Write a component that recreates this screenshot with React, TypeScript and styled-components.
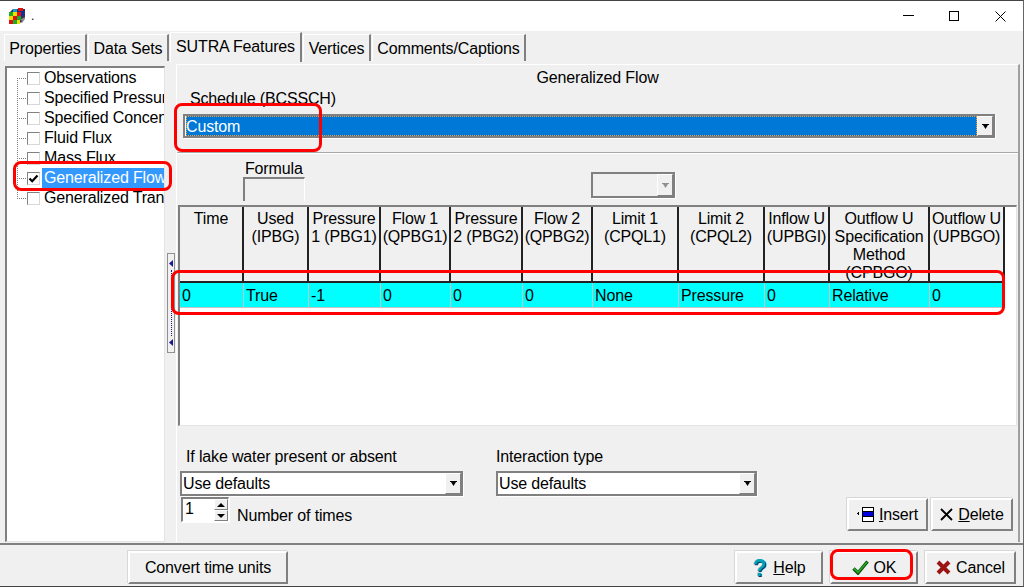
import React from 'react';
import styled, { createGlobalStyle } from 'styled-components';

const Global = createGlobalStyle`
  html, body { margin: 0; padding: 0; background: #f0f0f0; }
  * { box-sizing: border-box; }
`;

const Win = styled.div`
  position: relative;
  width: 1024px;
  height: 587px;
  overflow: hidden;
  display: flex;
  flex-direction: column;
  background: #f0f0f0;
  border-top: 1px solid #444;
  border-bottom: 1px solid #444;
  border-right: 1px solid #666;
  font-family: "Liberation Sans", Arial, sans-serif;
  font-size: 16px;
  letter-spacing: -0.15px;
  color: #000;
`;

const TitleBar = styled.div`
  height: 30px;
  flex: none;
  background: #fff;
  display: flex;
  align-items: center;
  padding-left: 9px;
`;
const TitleText = styled.span`
  margin-left: 6px;
  font-size: 12px;
  line-height: 12px;
`;
const WinBtns = styled.div`
  margin-left: auto;
  display: flex;
  height: 100%;
`;
const WinBtn = styled.div`
  width: 46px;
  display: flex;
  align-items: center;
  justify-content: center;
`;

const Body = styled.div`
  height: 512px;
  flex: none;
  display: flex;
`;
const LeftCol = styled.div`
  width: 167px;
  flex: none;
  padding-top: 2px;
`;
const Tabs = styled.div<{ $indent?: number }>`
  display: flex;
  align-items: flex-end;
  height: 28px;
  margin-left: ${p => p.$indent ?? 0}px;
  position: relative;
  z-index: 1;
`;
const Tab = styled.div<{ $w: number; $on?: boolean }>`
  width: ${p => p.$w}px;
  height: ${p => (p.$on ? 30 : 27)}px;
  flex: none;
  margin-right: 1px;
  display: flex;
  justify-content: center;
  padding-top: 5px;
  line-height: 18px;
  background: #f0f0f0;
  border-top: 1px solid #fff;
  border-left: 1px solid #fff;
  border-right: 2px solid #808080;
  white-space: nowrap;
  ${p => p.$on && 'margin-bottom: -1px;'}
`;
const TreeBox = styled.div`
  margin: 5px 0 0 5px;
  width: 160px;
  height: 476px;
  background: #fff;
  border-top: 2px solid #808080;
  border-left: 2px solid #808080;
  border-right: 1px solid #e4e4e4;
  border-bottom: 1px solid #e4e4e4;
  overflow: hidden;
`;
const TreeRow = styled.div`
  height: 20px;
  display: flex;
  align-items: center;
  white-space: nowrap;
`;
const Connector = styled.span<{ $pos: 'first' | 'mid' | 'last' }>`
  width: 10px;
  height: 20px;
  margin-left: 10px;
  flex: none;
  background:
    repeating-linear-gradient(to bottom, #808080 0 1px, transparent 1px 2px)
      0 ${p => (p.$pos === 'first' ? '10px' : '0')} / 1px ${p => (p.$pos === 'mid' ? '100%' : p.$pos === 'first' ? '10px' : '11px')} no-repeat,
    repeating-linear-gradient(to right, #808080 0 1px, transparent 1px 2px)
      0 10px / 100% 1px no-repeat;
`;
const Check = styled.span`
  width: 13px;
  height: 13px;
  flex: none;
  background: #fff;
  border-top: 1px solid #808080;
  border-left: 1px solid #808080;
  border-right: 1px solid #d8d8d8;
  border-bottom: 1px solid #d8d8d8;
  display: flex;
  align-items: center;
  justify-content: center;
`;
const TreeLabel = styled.span<{ $on?: boolean }>`
  margin-left: 2px;
  padding: 0 2px;
  line-height: 20px;
  height: 20px;
  ${p => p.$on && 'background: #3399ff; color: #fff;'}
`;

const Splitter = styled.div`
  width: 9px;
  flex: none;
  padding-top: 222px;
`;
const SplitHandle = styled.div`
  width: 8px;
  height: 100px;
  border: 1px solid #909090;
  background: #f0f0f0;
  display: flex;
  flex-direction: column;
  align-items: center;
  justify-content: space-between;
  padding: 6px 0;
`;
const SplitDots = styled.span`
  flex: 1;
  width: 0;
  margin: 3px 0;
  border-left: 1px dotted #1a1a80;
`;

const RightCol = styled.div`
  flex: 1;
  min-width: 0;
  padding-top: 2px;
`;
const Pane = styled.div`
  margin: 3px 0 0 0;
  width: 844px;
  height: 478px;
  border-top: 1px solid #fff;
  border-right: 2px solid #a0a0a0;
  border-left: 1px solid #fff;
  display: flex;
  flex-direction: column;
`;
const PaneTitle = styled.div`
  height: 22px;
  flex: none;
  padding-top: 2px;
  line-height: 22px;
  text-align: center;
`;
const ScheduleLabel = styled.div`
  height: 20px;
  flex: none;
  padding-top: 2px;
  line-height: 20px;
  margin-left: 13px;
`;
const Combo = styled.div<{ $w: number; $h?: number; $ml?: number; $mt?: number; $off?: boolean }>`
  width: ${p => p.$w}px;
  height: ${p => p.$h ?? 25}px;
  flex: none;
  margin-left: ${p => p.$ml ?? 0}px;
  margin-top: ${p => p.$mt ?? 0}px;
  background: ${p => (p.$off ? '#f0f0f0' : '#fff')};
  border: 2px solid #808080;
  box-shadow: 1px 1px 0 #fff;
  display: flex;
  align-items: stretch;
  line-height: 22px;
  padding-left: 1px;
`;
const ComboFocused = styled.div`
  flex: 1;
  background: #0078d7;
  color: #fff;
  outline: 1px dotted #ff9a30;
  outline-offset: -1px;
  line-height: 22px;
`;
const ComboText = styled.div`
  flex: 1;
`;
const ComboBtn = styled.div`
  width: 16px;
  flex: none;
  background: #f0f0f0;
  border-top: 1px solid #fff;
  border-left: 1px solid #fff;
  border-right: 1px solid #808080;
  border-bottom: 1px solid #808080;
  display: flex;
  align-items: center;
  justify-content: center;
`;
const Separator = styled.div`
  height: 2px;
  margin-top: 14px;
  flex: none;
  background: #a8a8a8;
  border-bottom: 1px solid #fff;
`;
const FormulaRow = styled.div`
  height: 51px;
  flex: none;
  display: flex;
`;
const FormulaCol = styled.div`
  width: 62px;
  margin-left: 66px;
  padding-top: 6px;
`;
const FormulaLabel = styled.div`
  line-height: 17px;
  padding-left: 2px;
`;
const FormulaBox = styled.div`
  height: 24px;
  border-top: 2px solid #808080;
  border-left: 2px solid #808080;
  border-right: 1px solid #fff;
`;
const GridFrame = styled.div`
  width: 839px;
  height: 221px;
  margin-left: 1px;
  flex: none;
  background: #fff;
  border-top: 2px solid #808080;
  border-left: 2px solid #808080;
  border-right: 1px solid #e4e4e4;
  border-bottom: 1px solid #e4e4e4;
  overflow: hidden;
`;
const GridHead = styled.div`
  display: flex;
  height: 76px;
`;
const HeadCell = styled.div<{ $w: number }>`
  width: ${p => p.$w}px;
  flex: none;
  background: #f0f0f0;
  border-right: 2px solid #222;
  border-bottom: 2px solid #222;
  text-align: center;
  line-height: 18px;
  padding-top: 3px;
  overflow: hidden;
  white-space: nowrap;
`;
const GridRow = styled.div`
  display: flex;
  height: 25px;
`;
const DataCell = styled.div<{ $w: number }>`
  width: ${p => p.$w}px;
  flex: none;
  background: #00ffff;
  border-right: 1px solid #c4c4c4;
  border-bottom: 1px solid #c4c4c4;
  padding-left: 2px;
  line-height: 26px;
  white-space: nowrap;
`;
const Lower = styled.div`
  flex: 1;
  display: flex;
  padding: 20px 0 0 3px;
`;
const LowerCol = styled.div<{ $w: number; $ml?: number }>`
  width: ${p => p.$w}px;
  margin-left: ${p => p.$ml ?? 0}px;
  flex: none;
`;
const FieldLabel = styled.div<{ $pl?: number }>`
  height: 25px;
  padding-top: 2px;
  line-height: 18px;
  padding-left: ${p => p.$pl ?? 0}px;
`;
const SpinRow = styled.div`
  display: flex;
  align-items: flex-end;
  margin-top: 1px;
`;
const Spinner = styled.div`
  width: 48px;
  height: 25px;
  margin-left: 1px;
  background: #fff;
  border-top: 2px solid #808080;
  border-left: 2px solid #808080;
  border-right: 1px solid #fff;
  border-bottom: 1px solid #fff;
  display: flex;
  line-height: 20px;
  box-shadow: 1px 1px 0 #fff;
`;
const SpinValue = styled.div`
  flex: 1;
  padding-left: 2px;
`;
const SpinBtns = styled.div`
  width: 14px;
  flex: none;
  display: flex;
  flex-direction: column;
`;
const SpinBtn = styled.div`
  flex: 1;
  background: #f0f0f0;
  border: 1px solid #808080;
  border-top-color: #fff;
  border-left-color: #fff;
  display: flex;
  align-items: center;
  justify-content: center;
`;
const SpinLabel = styled.div`
  margin-left: 8px;
  line-height: 18px;
  margin-bottom: -3px;
`;
const ActionBtns = styled.div`
  margin-left: auto;
  margin-right: 5px;
  margin-bottom: 11px;
  align-self: flex-end;
  display: flex;
  gap: 3px;
`;
const Btn = styled.div<{ $w: number }>`
  width: ${p => p.$w}px;
  height: 33px;
  flex: none;
  background: #f0f0f0;
  border-top: 2px solid #fff;
  border-left: 2px solid #fff;
  border-right: 2px solid #808080;
  border-bottom: 2px solid #808080;
  box-shadow: -1px -1px 0 #d8d8d8;
  display: flex;
  align-items: center;
  justify-content: center;
  gap: 5px;
  white-space: nowrap;
`;
const Footer = styled.div`
  flex: 1;
  display: flex;
  align-items: center;
  gap: 7px;
  border-top: 2px solid #808080;
  padding: 4px 7px 0 128px;
`;
const Spacer = styled.div`
  flex: 1;
`;
const HelpMark = styled.span`
  font-weight: 700;
  font-size: 23px;
  line-height: 22px;
  color: #00a3b8;
  text-shadow: 1px 1px 0 #0b3a66;
  margin-right: 2px;
`;
const Mark = styled.div<{ $x: number; $y: number; $w: number; $h: number }>`
  position: absolute;
  left: ${p => p.$x}px;
  top: ${p => p.$y}px;
  width: ${p => p.$w}px;
  height: ${p => p.$h}px;
  border: 3px solid #f00;
  border-radius: 8px;
  pointer-events: none;
  z-index: 5;
`;

const Arrow = ({ off }: { off?: boolean }) => (
  <svg width="7" height="5" viewBox="0 0 7 5">
    <path d="M0 0h7v1H6L3.5 5 1 1H0z" fill={off ? '#909090' : '#000'} />
  </svg>
);
const Small = ({ up }: { up?: boolean }) => (
  <svg width="8" height="4" viewBox="0 0 8 4">
    <path d={up ? 'M4 0L8 4H0z' : 'M0 0h8L4 4z'} fill="#000" />
  </svg>
);
const SplitArrow = () => (
  <svg width="4" height="7" viewBox="0 0 4 7"><path d="M4 0v7L0 3.5z" fill="#1a1a90" /></svg>
);

const Cube = () => (
  <svg width="16" height="16" viewBox="0 0 16 16">
    <path d="M0 5L4 1h12v9l-4 5z" fill="#3a2a5a" />
    <rect x="0" y="4" width="4" height="4" fill="#1faa2a" />
    <rect x="4" y="4" width="4" height="4" fill="#f0e000" />
    <rect x="8" y="4" width="4" height="4" fill="#e01010" />
    <rect x="0" y="8" width="4" height="4" fill="#f0e000" />
    <rect x="4" y="8" width="4" height="4" fill="#e01010" />
    <rect x="8" y="8" width="4" height="4" fill="#1faa2a" />
    <rect x="0" y="12" width="4" height="4" fill="#e01010" />
    <rect x="4" y="12" width="4" height="4" fill="#1faa2a" />
    <rect x="8" y="12" width="3" height="4" fill="#f0e000" />
    <rect x="4" y="1" width="4" height="3" fill="#10a0d0" />
    <rect x="9" y="0" width="5" height="3" fill="#e01010" />
    <rect x="12" y="3" width="3" height="5" fill="#1030a0" />
    <path d="M12 11l4-2v2l-3 4z" fill="#8a8a8a" />
  </svg>
);
const CheckMark = () => (
  <svg width="11" height="11" viewBox="0 0 11 11">
    <path d="M1.5 5.5L4.2 8.2 9.5 2.5" fill="none" stroke="#000" strokeWidth="2.2" />
  </svg>
);
const InsertIcon = () => (
  <svg width="17" height="15" viewBox="0 0 17 15">
    <rect x="0" y="6" width="2" height="1" fill="#000" />
    <rect x="1" y="5" width="1" height="3" fill="#000" />
    <rect x="5.5" y=".5" width="11" height="14" fill="#fff" stroke="#000" />
    <rect x="6" y="5" width="10" height="5" fill="#0000e0" />
    <path d="M6 4.5h10M6 9.5h10" stroke="#000" />
  </svg>
);
const DeleteIcon = () => (
  <svg width="13" height="13" viewBox="0 0 13 13">
    <path d="M1 1L12 12M12 1L1 12" stroke="#000" strokeWidth="1.8" />
  </svg>
);
const OkIcon = () => (
  <svg width="17" height="15" viewBox="0 0 17 15">
    <path d="M1.5 8.5L6 13 15.5 1.5" fill="none" stroke="#0c4a0c" strokeWidth="3.4" />
    <path d="M2 8.5L6 12.5 15 2" fill="none" stroke="#22a822" strokeWidth="1.8" />
  </svg>
);
const CancelIcon = () => (
  <svg width="15" height="15" viewBox="0 0 15 15">
    <path d="M2 2L13 13M13 2L2 13" stroke="#9c1414" strokeWidth="4" />
  </svg>
);

const treeItems = [
  'Observations',
  'Specified Pressure',
  'Specified Concentration',
  'Fluid Flux',
  'Mass Flux',
  'Generalized Flow',
  'Generalized Transport',
];

const columns: { w: number; head: string[]; value: string }[] = [
  { w: 64, head: ['Time'], value: '0' },
  { w: 65, head: ['Used', '(IPBG)'], value: 'True' },
  { w: 72, head: ['Pressure', '1 (PBG1)'], value: '-1' },
  { w: 70, head: ['Flow 1', '(QPBG1)'], value: '0' },
  { w: 72, head: ['Pressure', '2 (PBG2)'], value: '0' },
  { w: 70, head: ['Flow 2', '(QPBG2)'], value: '0' },
  { w: 86, head: ['Limit 1', '(CPQL1)'], value: 'None' },
  { w: 86, head: ['Limit 2', '(CPQL2)'], value: 'Pressure' },
  { w: 65, head: ['Inflow U', '(UPBGI)'], value: '0' },
  { w: 100, head: ['Outflow U', 'Specification', 'Method', '(CPBGO)'], value: 'Relative' },
  { w: 75, head: ['Outflow U', '(UPBGO)'], value: '0' },
];

export default function App() {
  return (
    <Win>
      <Global />
      <TitleBar>
        <Cube />
        <TitleText>.</TitleText>
        <WinBtns>
          <WinBtn>
            <svg width="11" height="2" viewBox="0 0 11 2"><rect width="11" height="1" fill="#000" /></svg>
          </WinBtn>
          <WinBtn>
            <svg width="10" height="10" viewBox="0 0 10 10"><rect x=".5" y=".5" width="9" height="9" fill="none" stroke="#000" /></svg>
          </WinBtn>
          <WinBtn>
            <svg width="11" height="11" viewBox="0 0 11 11"><path d="M.5.5l10 10M10.5.5l-10 10" stroke="#000" /></svg>
          </WinBtn>
        </WinBtns>
      </TitleBar>
      <Body>
        <LeftCol>
          <Tabs $indent={4}>
            <Tab $w={83}>Properties</Tab>
            <Tab $w={81}>Data Sets</Tab>
          </Tabs>
          <TreeBox>
            {treeItems.map((t, i) => (
              <TreeRow key={t}>
                <Connector $pos={i === 0 ? 'first' : i === treeItems.length - 1 ? 'last' : 'mid'} />
                <Check>{i === 5 && <CheckMark />}</Check>
                <TreeLabel $on={i === 5}>{t}</TreeLabel>
              </TreeRow>
            ))}
          </TreeBox>
        </LeftCol>
        <Splitter>
          <SplitHandle>
            <SplitArrow />
            <SplitDots />
            <SplitArrow />
          </SplitHandle>
        </Splitter>
        <RightCol>
          <Tabs $indent={-6}>
            <Tab $w={132} $on>SUTRA Features</Tab>
            <Tab $w={68}>Vertices</Tab>
            <Tab $w={154}>Comments/Captions</Tab>
          </Tabs>
          <Pane>
            <PaneTitle>Generalized Flow</PaneTitle>
            <ScheduleLabel>Schedule (BCSSCH)</ScheduleLabel>
            <Combo $w={812} $ml={6} $mt={7} $h={24}>
              <ComboFocused>Custom</ComboFocused>
              <ComboBtn><Arrow /></ComboBtn>
            </Combo>
            <Separator />
            <FormulaRow>
              <FormulaCol>
                <FormulaLabel>Formula</FormulaLabel>
                <FormulaBox />
              </FormulaCol>
              <Combo $w={84} $h={26} $ml={286} $mt={18} $off>
                <ComboText />
                <ComboBtn><Arrow off /></ComboBtn>
              </Combo>
            </FormulaRow>
            <GridFrame>
              <GridHead>
                {columns.map(c => (
                  <HeadCell key={c.head.join()} $w={c.w}>
                    {c.head.map(l => <div key={l}>{l}</div>)}
                  </HeadCell>
                ))}
              </GridHead>
              <GridRow>
                {columns.map(c => (
                  <DataCell key={c.head.join()} $w={c.w}>{c.value}</DataCell>
                ))}
              </GridRow>
            </GridFrame>
            <Lower>
              <LowerCol $w={283}>
                <FieldLabel $pl={6}>If lake water present or absent</FieldLabel>
                <Combo $w={283}>
                  <ComboText>Use defaults</ComboText>
                  <ComboBtn><Arrow /></ComboBtn>
                </Combo>
                <SpinRow>
                  <Spinner>
                    <SpinValue>1</SpinValue>
                    <SpinBtns>
                      <SpinBtn><Small up /></SpinBtn>
                      <SpinBtn><Small /></SpinBtn>
                    </SpinBtns>
                  </Spinner>
                  <SpinLabel>Number of times</SpinLabel>
                </SpinRow>
              </LowerCol>
              <LowerCol $w={261} $ml={33}>
                <FieldLabel>Interaction type</FieldLabel>
                <Combo $w={261}>
                  <ComboText>Use defaults</ComboText>
                  <ComboBtn><Arrow /></ComboBtn>
                </Combo>
              </LowerCol>
              <ActionBtns>
                <Btn $w={81}><InsertIcon /><span><u>I</u>nsert</span></Btn>
                <Btn $w={82}><DeleteIcon /><span><u>D</u>elete</span></Btn>
              </ActionBtns>
            </Lower>
          </Pane>
        </RightCol>
      </Body>
      <Footer>
        <Btn $w={160}>Convert time units</Btn>
        <Spacer />
        <Btn $w={88}><HelpMark>?</HelpMark><span><u>H</u>elp</span></Btn>
        <Btn $w={88}><OkIcon /><span>OK</span></Btn>
        <Btn $w={91}><CancelIcon /><span>Cancel</span></Btn>
      </Footer>
      <Mark $x={13} $y={160} $w={159} $h={30} />
      <Mark $x={174} $y={102} $w={148} $h={49} />
      <Mark $x={171} $y={269} $w={834} $h={45} />
      <Mark $x={830} $y={548} $w={83} $h={31} />
    </Win>
  );
}
